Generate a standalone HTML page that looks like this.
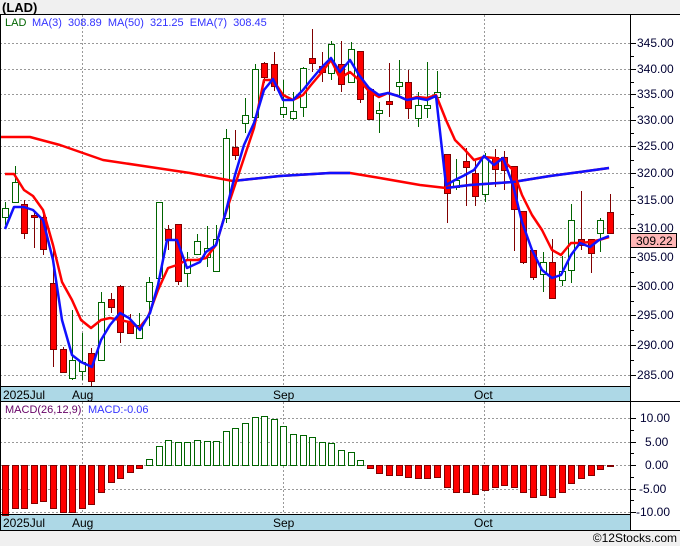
<!DOCTYPE html>
<html><head><meta charset="utf-8"><style>
html,body{margin:0;padding:0;background:#f0f0f0;}
svg{display:block;font-family:"Liberation Sans",sans-serif;}
</style></head><body>
<svg id="s" width="680" height="546" xmlns="http://www.w3.org/2000/svg">
<rect x="0" y="0" width="680" height="546" fill="#f0f0f0"/>
<rect x="0" y="14" width="680" height="516" fill="#fff"/>
<g id="grid"></g>
<rect x="0" y="387" width="630" height="14" fill="#add8e6"/>
<rect x="0" y="515" width="630" height="15" fill="#add8e6"/>
<g id="plot"></g>
<line x1="0" y1="14.5" x2="680" y2="14.5" stroke="#000"/>
<line x1="0.5" y1="14" x2="0.5" y2="530" stroke="#000"/>
<line x1="630.5" y1="14" x2="630.5" y2="530" stroke="#000"/>
<line x1="0" y1="386.5" x2="630" y2="386.5" stroke="#000"/>
<line x1="0" y1="401.5" x2="680" y2="401.5" stroke="#000"/>
<line x1="0" y1="514.5" x2="630" y2="514.5" stroke="#000"/>
<line x1="0" y1="530.5" x2="680" y2="530.5" stroke="#000"/>
<g id="ticks"></g>
<text x="2" y="12" font-size="13" font-weight="bold">(LAD)</text>
<text x="5" y="26" font-size="11" fill="#006400">LAD</text>
<text x="32" y="26" font-size="11" fill="#3333ff" xml:space="preserve">MA(3)  308.89  MA(50)  321.25  EMA(7)  308.45</text>
<text x="5" y="413" font-size="11" fill="#660066">MACD(26,12,9)</text>
<text x="88" y="413" font-size="11" fill="#3333ff">MACD:-0.06</text>
<g font-size="12" fill="#000">
<text x="3" y="399">2025Jul</text><text x="72" y="399">Aug</text><text x="273" y="399">Sep</text><text x="474" y="399">Oct</text>
<text x="3" y="527">2025Jul</text><text x="72" y="527">Aug</text><text x="273" y="527">Sep</text><text x="474" y="527">Oct</text>
</g>
<g font-size="12" fill="#000033">
<text x="637" y="47">345.00</text><text x="637" y="73">340.00</text><text x="637" y="98">335.00</text>
<text x="637" y="124">330.00</text><text x="637" y="150">325.00</text><text x="637" y="177">320.00</text>
<text x="637" y="204">315.00</text><text x="637" y="232">310.00</text><text x="637" y="261">305.00</text>
<text x="637" y="290">300.00</text><text x="637" y="319">295.00</text><text x="637" y="349">290.00</text>
<text x="637" y="379">285.00</text>
<text x="640" y="422">10.00</text><text x="645" y="446">5.00</text><text x="645" y="469">0.00</text>
<text x="639" y="493">-5.00</text><text x="636" y="516">-10.00</text>
</g>
<rect x="630.5" y="233.5" width="46" height="14" fill="#ffb6b6" stroke="#000"/>
<text x="636" y="245" font-size="12" fill="#000">309.22</text>
<text x="677" y="542" font-size="12" fill="#000" text-anchor="end">©12Stocks.com</text>
</svg>
<script>
var NS="http://www.w3.org/2000/svg";
function el(p,t,a){var e=document.createElementNS(NS,t);for(var k in a)e.setAttribute(k,a[k]);p.appendChild(e);return e;}
var G=document.getElementById('grid'),P=document.getElementById('plot'),T=document.getElementById('ticks');
var py=[43,69,94,120,146,173,200,228,257,286,315,345,375];
py.forEach(function(y){el(G,'line',{x1:0,x2:630,y1:y+.5,y2:y+.5,stroke:'#999','stroke-dasharray':'2,2'});el(T,'line',{x1:630,x2:636,y1:y+.5,y2:y+.5,stroke:'#000'});});
for(var i=0;i<py.length-1;i++){var m=Math.round((py[i]+py[i+1])/2)+.5;el(T,'line',{x1:630,x2:634,y1:m,y2:m,stroke:'#000'});}
[418,442,465,489,512].forEach(function(y){el(G,'line',{x1:0,x2:630,y1:y+.5,y2:y+.5,stroke:'#999','stroke-dasharray':'2,2'});el(T,'line',{x1:630,x2:636,y1:y+.5,y2:y+.5,stroke:'#000'});});
[430,453,477,500].forEach(function(y){el(T,'line',{x1:630,x2:634,y1:y+.5,y2:y+.5,stroke:'#000'});});
[82,283,484].forEach(function(x){el(G,'line',{x1:x+.5,x2:x+.5,y1:15,y2:386,stroke:'#999','stroke-dasharray':'2,2'});el(G,'line',{x1:x+.5,x2:x+.5,y1:402,y2:514,stroke:'#999','stroke-dasharray':'2,2'});});
var C=[[208,217,202,225,1],[182,202,166,202,1],[204,233,200,239,0],[215,217,213,248,0],[217,249,213,255,0],[283,349,250,367,0],[349,372,347,373,0],[360,378,310,380,1],[362,371,333,380,1],[353,381,348,387,0],[302,360,292,360,1],[299,307,293,313,0],[286,332,285,343,0],[322,333,314,333,0],[325,338,313,338,1],[282,301,277,326,1],[202,278,202,278,1],[229,240,225,250,0],[224,281,224,285,0],[260,273,252,287,1],[241,254,234,254,1],[248,257,226,267,1],[239,271,225,271,1],[138,218,129,223,1],[147,155,130,160,0],[115,123,98,133,1],[69,117,64,117,1],[63,77,62,83,0],[64,86,52,91,0],[107,114,80,118,1],[111,118,92,120,1],[68,107,67,117,1],[58,63,29,72,0],[66,72,52,82,0],[44,73,41,80,1],[64,84,41,92,0],[49,82,42,82,1],[51,99,51,103,0],[89,119,89,120,0],[110,113,102,133,1],[101,104,63,117,0],[82,86,60,97,1],[82,108,70,119,0],[105,118,92,127,1],[105,108,62,118,1],[92,97,71,103,1],[154,193,154,223,0],[180,187,159,190,1],[161,167,148,206,0],[173,196,161,206,0],[157,194,153,202,1],[157,169,149,187,0],[157,170,151,190,0],[166,209,166,251,0],[211,262,211,264,0],[250,277,250,280,0],[262,274,252,292,1],[262,298,239,299,0],[271,280,256,286,1],[220,270,204,283,1],[239,245,191,250,0],[239,253,239,273,0],[220,233,218,252,1],[212,233,194,233,0]];
function X(i){return 5+9.6*i;}
C.forEach(function(c,i){var x=Math.round(X(i));var col=c[4]?'#006400':'#800000';
el(P,'line',{x1:x+.5,x2:x+.5,y1:c[2],y2:c[3],stroke:col});
el(P,'rect',{x:x-2.5,y:c[0]+.5,width:6,height:Math.max(c[1]-c[0],2),fill:c[4]?'#fff':'#f00',stroke:col});});
function line(pts,col,w){el(P,'polyline',{points:pts.map(function(p){return p.join(',')}).join(' '),fill:'none',stroke:col,'stroke-width':w,'stroke-linejoin':'round'});}
var ma50=[[1,137],[30,137],[60,145],[103,160],[150,167],[190,173],[233,181],[280,176],[330,173],[350,173],[380,178],[420,185],[446,188],[470,185],[513,182],[550,176],[580,172],[609,168]];
line(ma50,'#f00',2.5);line(ma50.slice(6,10),'#1010ff',2.5);line(ma50.slice(12),'#1010ff',2.5);
var ema=[[5,174],[14,174],[24,190],[33,196],[43,210],[53,245],[62,282],[72,300],[81,320],[91,328],[101,320],[110,318],[120,320],[129,322],[139,328],[148,317],[158,290],[168,268],[177,265],[187,260],[197,260],[206,258],[216,245],[225,215],[235,185],[244,158],[254,128],[264,80],[273,80],[283,95],[293,100],[303,95],[311,85],[322,72],[331,60],[340,78],[350,72],[359,80],[369,91],[379,97],[388,93],[398,96],[407,100],[417,97],[427,98],[436,95],[446,120],[455,140],[465,150],[474,160],[484,157],[494,158],[503,160],[513,170],[522,195],[532,215],[542,230],[552,250],[561,255],[571,243],[580,243],[590,242],[599,240],[609,237]];
line(ema,'#f00',2.5);
var ma3=[[5,229],[14,207],[24,207],[33,210],[43,220],[53,260],[62,320],[72,355],[81,362],[92,367],[101,340],[110,325],[120,313],[129,318],[140,330],[150,313],[158,285],[167,240],[177,240],[187,268],[200,262],[206,252],[216,245],[225,215],[235,175],[244,145],[254,123],[264,90],[273,79],[283,100],[293,100],[303,90],[311,80],[322,67],[331,58],[340,72],[350,60],[359,75],[369,88],[379,95],[388,93],[398,96],[407,100],[417,98],[427,100],[436,96],[446,185],[455,180],[465,175],[474,170],[484,156],[494,165],[503,158],[513,185],[522,222],[532,250],[542,270],[552,278],[561,275],[571,255],[580,243],[590,247],[599,240],[609,236]];
line(ma3,'#1010ff',2.5);
var M=[515,508,508,503,501,508,512,512,508,504,492,482,478,472,468,459,446,440,442,442,440,441,441,431,428,423,417,416,419,426,434,435,437,442,443,450,452,460,468,473,475,475,477,478,478,477,487,492,492,494,490,487,485,487,492,497,495,497,492,483,478,475,469,466];
M.forEach(function(v,i){var x=Math.round(X(i));var up=v<465;
el(P,'rect',{x:x-2.5,y:Math.min(v,465)+.5,width:6,height:Math.max(Math.abs(v-465),1),fill:up?'#fff':'#f00',stroke:up?'#006400':'#800000'});});
</script>
</body></html>
